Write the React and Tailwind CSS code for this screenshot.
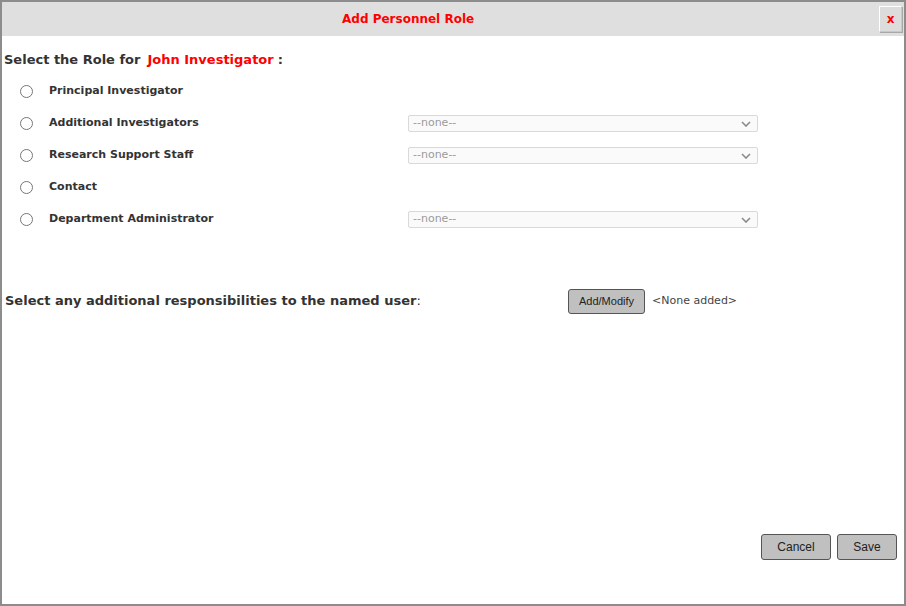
import React from "react";

const roles = [
  { label: "Principal Investigator", select: false },
  { label: "Additional Investigators", select: true },
  { label: "Research Support Staff", select: true },
  { label: "Contact", select: false },
  { label: "Department Administrator", select: true },
];

const Radio = () => (
  <span className="w-[13px] h-[13px] rounded-full border border-[#767676] bg-white shrink-0" />
);

const NoneSelect = () => (
  <div className="w-[350px] h-[17px] border border-[#d9d9d9] rounded-[2px] bg-[#fafafa] flex items-center justify-between px-1 text-[11px] text-[#9a9a9a]">
    <span>--none--</span>
    <svg width="10" height="6" viewBox="0 0 10 6" className="mr-[2px]">
      <path d="M1 1l4 4 4-4" fill="none" stroke="#8a8a8a" strokeWidth="1.6" />
    </svg>
  </div>
);

export default function App() {
  return (
    <div
      className="w-[906px] h-[606px] border-2 border-[#8c8c8c] bg-white flex flex-col text-[#333]"
      style={{ fontFamily: '"DejaVu Sans", Verdana, sans-serif' }}
    >
      {/* Header */}
      <div className="h-[34px] bg-[#dfdfdf] flex items-center relative shrink-0">
        <div className="pl-[340px] text-[12px] font-bold text-[#ff0000]">Add Personnel Role</div>
        <button className="absolute right-[2px] top-[4px] w-[23px] h-[26px] bg-[#dcdcdc] border border-[#c8c8c8] border-t-white border-l-white shadow-[1px_1px_0_#a8a8a8] text-[12px] font-bold text-[#ff0000] flex items-center justify-center">
          x
        </button>
      </div>

      <div className="pl-[2px] pt-[14px] text-[13px] font-bold flex">
        <span>Select the Role for</span>
        <span className="text-[#ff0000] ml-[7px]">John Investigator</span>
        <span className="ml-[4px]">:</span>
      </div>

      <div className="flex flex-col mt-[6px]">
        {roles.map((r) => (
          <div key={r.label} className="h-[32px] flex items-center pl-[18px]">
            <Radio />
            <span className="ml-[16px] w-[359px] text-[11px] font-bold">{r.label}</span>
            {r.select && <NoneSelect />}
          </div>
        ))}
      </div>

      <div className="flex items-center mt-[53px] pl-[3px]">
        <span className="w-[563px] text-[13px] font-bold">
          Select any additional responsibilities to the named user<span className="font-normal">:</span>
        </span>
        <button
          className="w-[77px] h-[25px] bg-[#c0c0c0] border border-[#555] rounded-[3px] text-[11px] text-[#222]"
          style={{ fontFamily: '"Liberation Sans", Arial, sans-serif' }}
        >
          Add/Modify
        </button>
        <span className="ml-[7px] text-[11px] text-[#444]">&lt;None added&gt;</span>
      </div>

      <div className="flex-1" />

      <div
        className="flex justify-end gap-[6px] pr-[7px] mb-[44px] text-[12px] text-[#222]"
        style={{ fontFamily: '"Liberation Sans", Arial, sans-serif' }}
      >
        <button className="w-[70px] h-[26px] bg-[#c0c0c0] border border-[#555] rounded-[3px]">Cancel</button>
        <button className="w-[60px] h-[26px] bg-[#c0c0c0] border border-[#555] rounded-[3px]">Save</button>
      </div>
    </div>
  );
}
